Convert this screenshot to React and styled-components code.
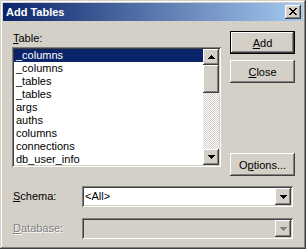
import React from "react";
import styled, { createGlobalStyle } from "styled-components";

const Global = createGlobalStyle`
  html, body { margin: 0; padding: 0; background: #d4d0c8; }
  body { font-family: "Liberation Sans", Arial, sans-serif; font-size: 11px; color: #000; }
`;

const raised = `
  box-shadow: inset -1px -1px #404040, inset 1px 1px #ffffff,
    inset -2px -2px #808080, inset 2px 2px #d4d0c8;
`;
const sunken = `
  box-shadow: inset 1px 1px #808080, inset -1px -1px #ffffff,
    inset 2px 2px #404040, inset -2px -2px #d4d0c8;
`;

const Window = styled.div`
  width: 306px;
  height: 249px;
  box-sizing: border-box;
  padding: 3px;
  background: #d4d0c8;
  box-shadow: inset -1px -1px #404040, inset 1px 1px #d4d0c8,
    inset -2px -2px #808080, inset 2px 2px #ffffff;
  display: flex;
  flex-direction: column;
`;

const TitleBar = styled.div`
  height: 18px;
  display: flex;
  align-items: center;
  justify-content: space-between;
  padding: 0 2px 0 3px;
  background: linear-gradient(to right, #0a246a, #a6caf0);
  color: #fff;
  font-weight: bold;
  font-size: 11px;
`;

const TitleButton = styled.div`
  width: 16px;
  height: 14px;
  box-sizing: border-box;
  background: #d4d0c8;
  ${raised}
  display: flex;
  align-items: center;
  justify-content: center;
  padding-bottom: 1px;
`;

const Body = styled.div`
  padding: 10px 0 0 9px;
  display: flex;
  flex-direction: column;
`;

const Top = styled.div`
  display: flex;
  align-items: flex-start;
`;

const LeftCol = styled.div`
  display: flex;
  flex-direction: column;
  width: 209px;
`;

const Label = styled.label`
  line-height: 13px;
  padding-left: ${(p) => p.$indent || 0}px;
  margin: ${(p) => p.$margin || "0"};
  color: ${(p) => (p.$disabled ? "#808080" : "#000")};
  text-shadow: ${(p) => (p.$disabled ? "1px 1px #fff" : "none")};
  width: ${(p) => (p.$width ? p.$width + "px" : "auto")};
  flex-shrink: 0;
`;

const U = styled.span`
  text-decoration: underline;
`;

const ListBox = styled.div`
  height: 120px;
  box-sizing: border-box;
  padding: 2px;
  background: #fff;
  ${sunken}
  display: flex;
`;

const Items = styled.div`
  flex: 1;
  display: flex;
  flex-direction: column;
  overflow: hidden;
`;

const Item = styled.div`
  height: 13px;
  line-height: 13px;
  padding-left: 2px;
  white-space: nowrap;
  background: ${(p) => (p.$selected ? "#0a246a" : "transparent")};
  color: ${(p) => (p.$selected ? "#fff" : "#000")};
`;

const ScrollBar = styled.div`
  width: 16px;
  display: flex;
  flex-direction: column;
`;

const ScrollBtn = styled.div`
  width: 16px;
  height: ${(p) => p.$h || 16}px;
  box-sizing: border-box;
  background: #d4d0c8;
  ${raised}
  display: flex;
  align-items: center;
  justify-content: center;
  flex-shrink: 0;
`;

const Track = styled.div`
  flex: 1;
  background-image: conic-gradient(#ffffff 25%, #d4d0c8 0 50%, #ffffff 0 75%, #d4d0c8 0);
  background-size: 2px 2px;
`;

const RightCol = styled.div`
  display: flex;
  flex-direction: column;
  margin-left: 9px;
`;

const Button = styled.div`
  width: 65px;
  height: 23px;
  box-sizing: border-box;
  background: #d4d0c8;
  display: flex;
  align-items: center;
  justify-content: center;
  margin-top: ${(p) => p.$mt || 0}px;
  ${(p) =>
    p.$default
      ? `border: 1px solid #000; box-shadow: inset -1px -1px #404040, inset 1px 1px #ffffff, inset -2px -2px #808080, inset 2px 2px #d4d0c8;`
      : raised}
`;

const Row = styled.div`
  display: flex;
  align-items: center;
  margin-top: ${(p) => p.$mt}px;
`;

const Combo = styled.div`
  width: 211px;
  height: 21px;
  box-sizing: border-box;
  padding: 2px;
  background: ${(p) => (p.$disabled ? "#d4d0c8" : "#fff")};
  ${sunken}
  display: flex;
  align-items: stretch;
`;

const ComboText = styled.div`
  flex: 1;
  padding-left: 1px;
  line-height: 17px;
`;

const DropBtn = styled(ScrollBtn)`
  height: 17px;
`;

const Arrow = ({ up, color = "#000" }) => (
  <svg width="7" height="4" viewBox="0 0 7 4" style={{ display: "block" }}>
    {up ? (
      <path d="M3 0h1v1h1v1h1v1h1v1H0V3h1V2h1V1h1z" fill={color} />
    ) : (
      <path d="M0 0h7v1H6v1H5v1H4v1H3V3H2V2H1V1H0z" fill={color} />
    )}
  </svg>
);

const CloseGlyph = () => (
  <svg width="8" height="7" viewBox="0 0 8 7" style={{ display: "block" }}>
    <path
      d="M0 0h2v1h1v1h2V1h1V0h2v1H7v1H6v1H5v1h1v1h1v1h1v1H6V6H5V5H3v1H2v1H0V6h1V5h1V4h1V3H2V2H1V1H0z"
      fill="#000"
    />
  </svg>
);

const items = [
  "_columns",
  "_columns",
  "_tables",
  "_tables",
  "args",
  "auths",
  "columns",
  "connections",
  "db_user_info",
];

export default function App() {
  return (
    <>
      <Global />
      <Window>
        <TitleBar>
          <span>Add Tables</span>
          <TitleButton>
            <CloseGlyph />
          </TitleButton>
        </TitleBar>
        <Body>
          <Top>
            <LeftCol>
              <Label $indent={1} $margin="1px 0 2px 0">
                <U>T</U>able:
              </Label>
              <ListBox>
                <Items>
                  {items.map((t, i) => (
                    <Item key={i} $selected={i === 0}>
                      {t}
                    </Item>
                  ))}
                </Items>
                <ScrollBar>
                  <ScrollBtn>
                    <Arrow up />
                  </ScrollBtn>
                  <ScrollBtn $h={28} />
                  <Track />
                  <ScrollBtn>
                    <Arrow />
                  </ScrollBtn>
                </ScrollBar>
              </ListBox>
            </LeftCol>
            <RightCol>
              <Button $default>
                <span>
                  <U>A</U>dd
                </span>
              </Button>
              <Button $mt={6}>
                <span>
                  <U>C</U>lose
                </span>
              </Button>
              <Button $mt={70}>
                <span>
                  O<U>p</U>tions...
                </span>
              </Button>
            </RightCol>
          </Top>
          <Row $mt={10}>
            <Label $indent={1} $width={69}>
              <U>S</U>chema:
            </Label>
            <Combo>
              <ComboText>&lt;All&gt;</ComboText>
              <DropBtn>
                <Arrow />
              </DropBtn>
            </Combo>
          </Row>
          <Row $mt={11}>
            <Label $indent={1} $width={69} $disabled>
              <U>D</U>atabase:
            </Label>
            <Combo $disabled>
              <ComboText />
              <DropBtn>
                <Arrow color="#808080" />
              </DropBtn>
            </Combo>
          </Row>
        </Body>
      </Window>
    </>
  );
}
